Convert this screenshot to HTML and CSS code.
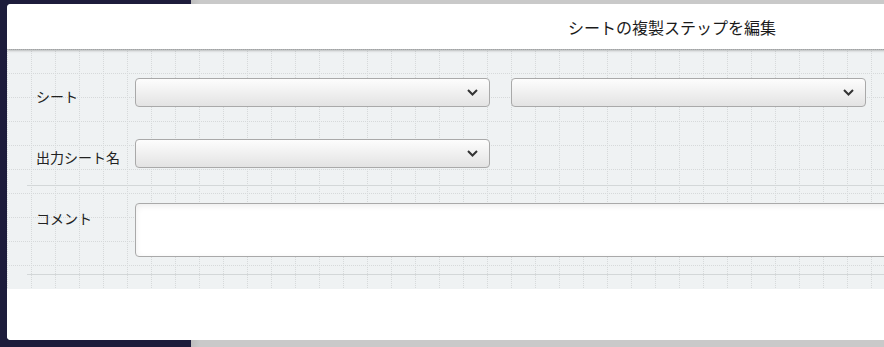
FILE: index.html
```html
<!DOCTYPE html>
<html lang="ja">
<head>
    <meta charset="UTF-8">
    <meta name="viewport" content="width=device-width, initial-scale=1.0">
    <title>シートの複製ステップを編集</title>
    <link rel="stylesheet" href="styles.css">
</head>
<body>
    <div class="dialog">
        <div class="dialog-header">
            <h1>シートの複製ステップを編集</h1>
        </div>

        <div class="dialog-body">
            <div class="field-group">
                <div class="field-row">
                    <label class="field-label">シート</label>
                    <div class="select-box">
                        <svg width="11" height="7" viewBox="0 0 11 7"><polyline points="1,1 5.5,5.5 10,1" fill="none" stroke="#333" stroke-width="2"/></svg>
                    </div>
                    <div class="select-box">
                        <svg width="11" height="7" viewBox="0 0 11 7"><polyline points="1,1 5.5,5.5 10,1" fill="none" stroke="#333" stroke-width="2"/></svg>
                    </div>
                </div>
                <div class="field-row second">
                    <label class="field-label">出力シート名</label>
                    <div class="select-box">
                        <svg width="11" height="7" viewBox="0 0 11 7"><polyline points="1,1 5.5,5.5 10,1" fill="none" stroke="#333" stroke-width="2"/></svg>
                    </div>
                </div>
            </div>

            <div class="divider"></div>

            <div class="field-group comment-group">
                <div class="field-row">
                    <label class="field-label top">コメント</label>
                    <textarea class="comment-box"></textarea>
                </div>
            </div>

            <div class="divider"></div>
        </div>

        <div class="dialog-footer"></div>
    </div>
</body>
</html>
```

FILE: styles.css
```css
body {
    margin: 0;
    height: 347px;
    overflow: hidden;
    font-family: "Noto Sans CJK JP", "Liberation Sans", sans-serif;
    color: #222;
    background: linear-gradient(to right, #1d1c3b 0, #1d1c3b 191px, #bdbdbd 191px, #c9c9c9 200px);
}

.dialog {
    margin: 4px 0 0 7px;
    width: 1330px;
    background-color: #fff;
    border-radius: 4px;
    overflow: hidden;
}

.dialog-header {
    position: relative;
    z-index: 1;
    height: 45px;
    display: flex;
    align-items: center;
    justify-content: center;
    background-color: #fff;
    box-shadow: 0 1px 3px rgba(0, 0, 0, 0.4);
}

.dialog-header h1 {
    margin: 0;
    font-size: 16px;
    font-weight: normal;
    line-height: 20px;
    color: #1a1a1a;
}

/* grid paper: dotted lines every 24px */
.dialog-body {
    height: 240px;
    padding-left: 20px;
    box-sizing: border-box;
    background-color: #eff2f3;
    background-image:
        repeating-linear-gradient(to bottom, transparent 0, transparent 1px, #eff2f3 1px, #eff2f3 2px),
        repeating-linear-gradient(to right, transparent 0, transparent 1px, #eff2f3 1px, #eff2f3 2px),
        linear-gradient(to right, #d6d9da 1px, transparent 1px),
        linear-gradient(to bottom, #d6d9da 1px, transparent 1px);
    background-size: auto, auto, 24px 24px, 24px 24px;
}

.field-group {
    padding: 29px 0 17px;
}

.comment-group {
    padding-top: 17px;
}

.field-row {
    display: flex;
    align-items: flex-start;
    gap: 21px;
}

.field-row.second {
    margin-top: 32px;
}

.field-label {
    width: 99px;
    margin-right: -21px;
    padding: 8px 0 0 9px;
    font-size: 14px;
    line-height: 20px;
}

.field-label.top {
    padding-top: 5px;
}

.select-box {
    width: 355px;
    height: 29px;
    box-sizing: border-box;
    display: flex;
    align-items: center;
    justify-content: flex-end;
    padding-right: 11px;
    border: 1px solid #a9a9a9;
    border-radius: 4px;
    background: linear-gradient(to bottom, #fdfdfd, #e3e3e3);
}

.comment-box {
    flex: 1;
    height: 54px;
    margin-right: 20px;
    box-sizing: border-box;
    border: 1px solid #a9a9a9;
    border-radius: 4px;
    background-color: #fff;
    box-shadow: inset 0 2px 6px rgba(0, 0, 0, 0.08);
    resize: none;
    font-family: inherit;
}

.divider {
    border-top: 1px solid #d3d7d8;
}

.dialog-footer {
    height: 51px;
    background-color: #fff;
}
```
